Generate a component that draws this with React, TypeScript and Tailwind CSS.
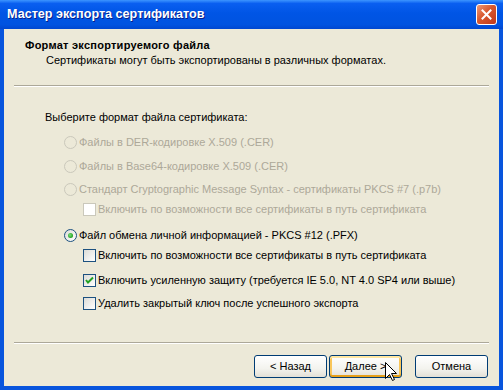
import React from "react";

function Radio({ checked, disabled }: { checked?: boolean; disabled?: boolean }) {
	return (
		<span
			className={`w-[13px] h-[13px] rounded-full border flex items-center justify-center shrink-0 ${
				disabled
					? "border-[#CAC8BB] bg-[#ECE9D8]"
					: "border-[#1C5180] bg-[linear-gradient(135deg,#DCDCD7,#FFFFFF)]"
			}`}>
			{checked && (
				<span className="w-[5px] h-[5px] rounded-full bg-[radial-gradient(circle_at_40%_40%,#7BE07B,#21A121_70%)]" />
			)}
		</span>
	);
}

function Checkbox({ checked, disabled }: { checked?: boolean; disabled?: boolean }) {
	return (
		<span
			className={`w-[13px] h-[13px] border flex items-center justify-center shrink-0 ${
				disabled
					? "border-[#CAC8BB] bg-white"
					: "border-[#1C5180] bg-[linear-gradient(135deg,#DCDCD7,#FFFFFF)]"
			}`}>
			{checked && (
				<svg width="9" height="9" viewBox="0 0 9 9">
					<path d="M1 4 L3 6.5 L8 1.5" fill="none" stroke="#21A121" strokeWidth="2" />
				</svg>
			)}
		</span>
	);
}

function Option({
	kind,
	checked,
	disabled,
	indent,
	mt,
	children,
}: {
	kind: "radio" | "check";
	checked?: boolean;
	disabled?: boolean;
	indent: string;
	mt: string;
	children: React.ReactNode;
}) {
	return (
		<div className={`flex items-center gap-[2px] h-[13px] ${indent} ${mt}`}>
			{kind === "radio" ? (
				<Radio checked={checked} disabled={disabled} />
			) : (
				<Checkbox checked={checked} disabled={disabled} />
			)}
			<span className={`whitespace-nowrap ${disabled ? "text-[#ACA899]" : "text-black"}`}>
				{children}
			</span>
		</div>
	);
}

function XpButton({ label, hover }: { label: string; hover?: boolean }) {
	return (
		<button
			className={`w-[73px] h-[23px] rounded-[3px] border border-[#003C74] bg-[linear-gradient(to_bottom,#FFFFFF,#F3F3EE_60%,#E3E0D6)] text-black text-[11px] leading-[13px] ${
				hover
					? "shadow-[inset_0_2px_0_#FFE7A2,inset_0_-2px_0_#E5A01A,inset_2px_0_0_#F9C65A,inset_-2px_0_0_#F9C65A]"
					: ""
			}`}>
			{label}
		</button>
	);
}

function Separator() {
	return <div className="h-[2px] mx-[10px] border-t border-[#ACA899] border-b border-b-white" />;
}

export default function App() {
	return (
		<div className="relative w-[503px] h-[390px] flex flex-col bg-[#0855DD] font-['Tahoma','Liberation_Sans',sans-serif] text-[11px] leading-[13px] select-none">
			{/* Title bar */}
			<div className="h-[29px] flex items-center justify-between pl-[7px] pr-[6px] bg-[linear-gradient(to_bottom,#3D95FF_0%,#0A5FF0_12%,#0055E5_45%,#0053E0_85%,#0047D0_100%)]">
				<span className="text-white font-bold text-[12.6px] [text-shadow:1px_1px_0_#0A1F8A]">
					Мастер экспорта сертификатов
				</span>
				<div className="w-[21px] h-[21px] rounded-[3px] border border-white bg-[linear-gradient(135deg,#EE9A78,#D8582E_45%,#C0381A)] flex items-center justify-center">
					<svg width="11" height="11" viewBox="0 0 11 11">
						<path d="M1.5 1.5 L9.5 9.5 M9.5 1.5 L1.5 9.5" stroke="white" strokeWidth="2" strokeLinecap="square" />
					</svg>
				</div>
			</div>

			{/* Body */}
			<div className="flex-1 mx-[4px] mb-[4px] bg-[#ECE9D8] flex flex-col">
				<div className="pl-[21px] pt-[10px] font-bold tracking-[0.25px] text-black">Формат экспортируемого файла</div>
				<div className="pl-[42px] mt-[2px] text-black">
					Сертификаты могут быть экспортированы в различных форматах.
				</div>
				<div className="mt-[18px]">
					<Separator />
				</div>

				<div className="pl-[41px] mt-[24px] text-black">Выберите формат файла сертификата:</div>
				<Option kind="radio" disabled indent="pl-[60px]" mt="mt-[12px]">
					Файлы в DER-кодировке X.509 (.CER)
				</Option>
				<Option kind="radio" disabled indent="pl-[60px]" mt="mt-[11px]">
					Файлы в Base64-кодировке X.509 (.CER)
				</Option>
				<Option kind="radio" disabled indent="pl-[60px]" mt="mt-[10px]">
					Стандарт Cryptographic Message Syntax - сертификаты PKCS #7 (.p7b)
				</Option>
				<Option kind="check" disabled indent="pl-[79px]" mt="mt-[7px]">
					Включить по возможности все сертификаты в путь сертификата
				</Option>
				<Option kind="radio" checked indent="pl-[60px]" mt="mt-[13px]">
					Файл обмена личной информацией - PKCS #12 (.PFX)
				</Option>
				<Option kind="check" indent="pl-[79px]" mt="mt-[7px]">
					Включить по возможности все сертификаты в путь сертификата
				</Option>
				<Option kind="check" checked indent="pl-[79px]" mt="mt-[12px]">
					Включить усиленную защиту (требуется IE 5.0, NT 4.0 SP4 или выше)
				</Option>
				<Option kind="check" indent="pl-[79px]" mt="mt-[10px]">
					Удалить закрытый ключ после успешного экспорта
				</Option>

				<div className="mt-auto">
					<Separator />
				</div>
				<div className="mt-[11px] pb-[8px] pr-[11px] flex justify-end items-center">
					<XpButton label="< Назад" />
					<div className="ml-[2px]">
						<XpButton label="Далее >" hover />
					</div>
					<div className="ml-[13px]">
						<XpButton label="Отмена" />
					</div>
				</div>
			</div>

			{/* Mouse cursor */}
			<svg className="absolute left-[385px] top-[362px]" width="13" height="20" viewBox="0 0 13 20">
				<path d="M0.5 0.5 L0.5 16.5 L4.5 12.5 L7.5 18.5 L9.5 17.5 L6.5 11.5 L11.5 11.5 Z" fill="white" stroke="black" strokeWidth="1" />
			</svg>
		</div>
	);
}
